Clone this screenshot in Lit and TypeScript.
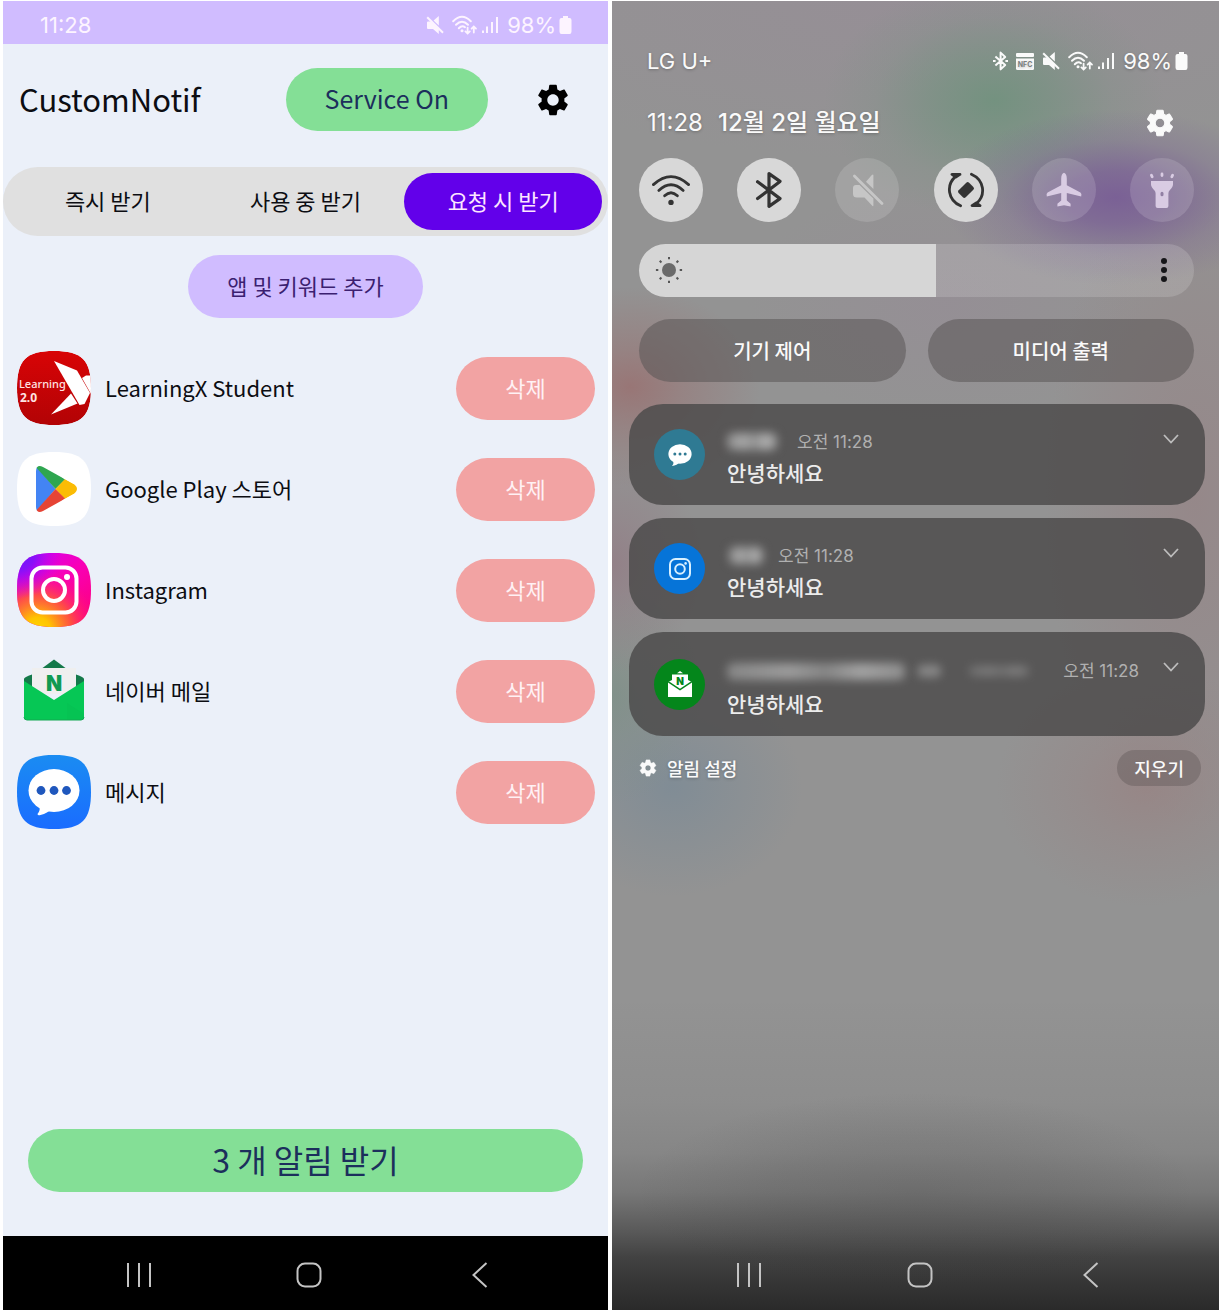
import { LitElement, html, css, svg, type TemplateResult } from "lit";
import { customElement, state } from "lit/decorators.js";
import { classMap } from "lit/directives/class-map.js";
import { styleMap } from "lit/directives/style-map.js";

const SQUIRCLE = "M37 0C65 0 74 9 74 37S65 74 37 74 0 65 0 37 9 0 37 0Z";
const GEAR =
  "M19.14 12.94c.04-.3.06-.61.06-.94 0-.32-.02-.64-.07-.94l2.03-1.58c.18-.14.23-.41.12-.61l-1.92-3.32c-.12-.22-.37-.29-.59-.22l-2.39.96c-.5-.38-1.03-.7-1.62-.94l-.36-2.54c-.04-.24-.24-.41-.48-.41h-3.84c-.24 0-.43.17-.47.41l-.36 2.54c-.59.24-1.13.57-1.62.94l-2.39-.96c-.22-.08-.47 0-.59.22L2.74 8.87c-.12.21-.08.47.12.61l2.03 1.58c-.05.3-.09.63-.09.94s.02.64.07.94l-2.03 1.58c-.18.14-.23.41-.12.61l1.92 3.32c.12.22.37.29.59.22l2.39-.96c.5.38 1.03.7 1.62.94l.36 2.54c.05.24.24.41.48.41h3.84c.24 0 .44-.17.47-.41l.36-2.54c.59-.24 1.13-.56 1.62-.94l2.39.96c.22.08.47 0 .59-.22l1.92-3.32c.12-.22.07-.47-.12-.61l-2.01-1.58zM12 15.6c-1.98 0-3.6-1.62-3.6-3.6s1.62-3.6 3.6-3.6 3.6 1.62 3.6 3.6-1.62 3.6-3.6 3.6z";
const GEAR_BOLD = `${GEAR}`;

const gear = (size: number, stroke = 0) => html`
  <svg width=${size} height=${size} viewBox="0 0 24 24" fill="currentColor" stroke="currentColor"
    stroke-width=${stroke} stroke-linejoin="round" aria-hidden="true">
    <path d=${GEAR_BOLD} />
  </svg>`;

/* ---------- status bar ---------- */
const statusMute = html`
  <svg width="18" height="18" viewBox="0 0 18 18" fill="currentColor" aria-hidden="true">
    <path d="M1 6.4Q1 5.4 2 5.4H4.8L12.8 13V18L7 13H2Q1 13 1 12Z" />
    <path d="M12.8 0V9.4L7.6 4.4Z" />
    <path d="M1.2 1.2 17 16.8" fill="none" stroke="currentColor" stroke-width="2" />
  </svg>`;
const statusWifi = html`
  <svg class="st-wifi" width="26" height="20" viewBox="0 0 26 20" fill="none" stroke="currentColor" stroke-linecap="round" aria-hidden="true">
    <g stroke-width="2">
      <path d="M1.2 6.2Q10 -2.6 18.8 6.2" />
      <path d="M4 9.8Q10 3.6 16 9.8" />
      <path d="M6.8 13.2Q10 9.8 13 12.2" />
    </g>
    <circle cx="10" cy="15.8" r="1.5" fill="currentColor" stroke="none" />
    <g stroke-width="1.8">
      <path d="M15.6 12.6V18.4M13.4 16.4 15.6 18.6 17.8 16.4" />
      <path d="M21.8 17.6V11.6M19.6 13.6 21.8 11.4 24 13.6" />
    </g>
  </svg>`;
const statusSignal = html`
  <svg width="17" height="18" viewBox="0 0 17 18" fill="currentColor" aria-hidden="true">
    <rect x="0" y="14.5" width="2" height="2.5" />
    <rect x="4" y="10.5" width="2" height="6.5" />
    <rect x="9" y="6" width="2" height="11" />
    <rect x="14" y="1" width="2" height="16" />
  </svg>`;
const statusBattery = html`
  <svg width="13" height="18" viewBox="0 0 13 18" fill="currentColor" aria-hidden="true">
    <path d="M4 0H9V2H10.5Q12.5 2 12.5 4V15.5Q12.5 18 10.5 18H2.5Q.5 18 .5 15.5V4Q.5 2 2.5 2H4Z" />
  </svg>`;
const statusBluetooth = html`
  <svg width="15" height="20" viewBox="0 0 15 20" fill="none" stroke="currentColor" stroke-width="2" stroke-linejoin="round" aria-hidden="true">
    <path d="M2.4 5.4 12.2 14 7.6 18.4V1.6L12.2 6 2.4 14.6M0 10H2.6M12.4 10H15" />
  </svg>`;
const statusNfc = html`
  <svg width="18" height="17" viewBox="0 0 18 17" aria-hidden="true">
    <rect width="18" height="4" rx="1" fill="currentColor" />
    <path d="M0 5.6H18V15.5Q18 17 16.5 17H1.5Q0 17 0 15.5Z" fill="currentColor" />
    <text x="9" y="14" text-anchor="middle" class="nfc">NFC</text>
  </svg>`;

/* ---------- quick toggles ---------- */
const qWifi = html`
  <svg width="40" height="34" viewBox="0 0 40 34" fill="none" stroke="currentColor" stroke-width="2.8" stroke-linecap="round" aria-hidden="true">
    <path d="M2.4 11.6Q20 -4.4 37.6 11.6" />
    <path d="M7.8 17.4Q20 6 32.2 17.4" />
    <path d="M13.6 22.8Q20 16.6 26.4 22.8" />
    <circle cx="20" cy="29.4" r="2.7" fill="currentColor" stroke="none" />
  </svg>`;
const qBluetooth = html`
  <svg width="30" height="38" viewBox="0 0 30 38" fill="none" stroke="currentColor" stroke-width="3.2" stroke-linecap="round" stroke-linejoin="round" aria-hidden="true">
    <path d="M3.6 10.8 26 27.6 15 35.4V2.6L26 10.4 3.6 27.6" />
  </svg>`;
const qMute = html`
  <svg width="34" height="34" viewBox="0 0 34 34" fill="currentColor" aria-hidden="true">
    <path d="M6 12H9.5L23.4 25.6V32.2Q23.4 34 22 32.6L14.5 24.6H7Q3 24.6 3 21V15Q3 12 6 12Z" />
    <path d="M23.4 2.6V16L16 8.8 21.8 2Q23.4 .6 23.4 2.6Z" />
    <path d="M4.4 3 32 30.6" fill="none" stroke="currentColor" stroke-width="2.8" stroke-linecap="round" />
  </svg>`;
const qRotate = html`
  <svg width="38" height="38" viewBox="0 0 38 38" fill="none" stroke="currentColor" stroke-width="2.8" stroke-linecap="round" stroke-linejoin="round" aria-hidden="true">
    <path d="M13.6 34.8C.6 29-1 14 8.4 5.6M5 3.4H13L8.8 6Z" />
    <path d="M24.4 3.2C37.4 9 39 24 29.6 32.4M33 34.6H25L29.2 32Z" />
    <rect x="11.6" y="14" width="14.8" height="10" rx="2" fill="currentColor" stroke="none" transform="rotate(-45 19 19)" />
  </svg>`;
const qPlane = html`
  <svg width="36" height="36" viewBox="0 0 36 36" fill="currentColor" aria-hidden="true">
    <path d="M18 .8Q20.8 1.6 20.8 7V13.2L34.4 20.4Q36 21.4 35.2 24.4L20.8 21V28.6L24.6 31.8V34.6L18 33.2 11.4 34.6V31.8L15.2 28.6V21L.8 24.4Q0 21.4 1.6 20.4L15.2 13.2V7Q15.2 1.6 18 .8Z" />
  </svg>`;
const qTorch = html`
  <svg width="26" height="36" viewBox="0 0 26 36" aria-hidden="true">
    <path fill="currentColor" fill-rule="evenodd" d="M2 9H24V12.5Q24 15 20.5 18.6Q19.4 19.8 19.4 21.5V34Q19.4 36 17.4 36H8.6Q6.6 36 6.6 34V21.5Q6.6 19.8 5.5 18.6Q2 15 2 12.5ZM13 19.8A1.5 1.5 0 0 0 11.5 21.3V22.7A1.5 1.5 0 0 0 14.5 22.7V21.3A1.5 1.5 0 0 0 13 19.8Z" />
    <path fill="none" stroke="currentColor" stroke-width="2.8" stroke-linecap="round" d="M2.4 3.2 3.2 4.8M13 2V3.6M23.6 3.2 22.8 4.8" />
  </svg>`;

/* ---------- app icons ---------- */
const appLearning = html`
  <svg class="app" viewBox="0 0 74 74" aria-hidden="true">
    <defs>
      <linearGradient id="lx" x2="0" y2="1"><stop stop-color="#d80406" /><stop offset="1" stop-color="#b20305" /></linearGradient>
      <clipPath id="lxc"><path d=${SQUIRCLE} /></clipPath>
    </defs>
    <g clip-path="url(#lxc)">
      <path d=${SQUIRCLE} fill="url(#lx)" />
      <path d="M37 10 60 19.5 73 42 67.5 53 62.5 54Z" fill="#fff" />
      <path d="M65 27 69 24.5H74V43Z" fill="#fff" />
      <path d="M54 42.5 60.5 52.5 34 63.5Z" fill="#fff" />
      <text x="2" y="37" class="lx1">Learning</text>
      <text x="3" y="51" class="lx2">2.0</text>
    </g>
  </svg>`;
const appPlay = html`
  <svg class="app" viewBox="0 0 74 74" aria-hidden="true">
    <defs><clipPath id="gp"><path d="M19 19Q19.5 12 26 15L57.5 32.5Q62.5 37 57.5 41.5L26 59Q19.5 62 19 55Z" /></clipPath></defs>
    <path d=${SQUIRCLE} fill="#fff" />
    <g clip-path="url(#gp)">
      <path d="M16 10V64L38.5 37Z" fill="#4384f4" />
      <path d="M16 12 38.5 37 48 27.5 26 10Z" fill="#2fa650" />
      <path d="M48 27 38.5 37 48 47 66 37Z" fill="#fbbc05" />
      <path d="M16 62 38.5 37 48 46.5 26 64Z" fill="#e64435" />
    </g>
  </svg>`;
const appInstagram = html`
  <svg class="app" viewBox="0 0 74 74" aria-hidden="true">
    <defs>
      <linearGradient id="ig1" x1=".2" x2=".9" y2="1"><stop stop-color="#d400f0" /><stop offset=".4" stop-color="#f800b8" /><stop offset="1" stop-color="#ff0078" /></linearGradient>
      <radialGradient id="ig2" cx=".28" cy="1.04" r=".85"><stop stop-color="#ffd600" /><stop offset=".2" stop-color="#ffc400" /><stop offset=".55" stop-color="#ff5a36" stop-opacity=".85" /><stop offset="1" stop-color="#ff0090" stop-opacity="0" /></radialGradient>
      <radialGradient id="ig3" cx="0" cy="0" r=".62"><stop stop-color="#5a1cff" /><stop offset=".4" stop-color="#8a10f8" /><stop offset="1" stop-color="#d400f0" stop-opacity="0" /></radialGradient>
    </defs>
    <path d=${SQUIRCLE} fill="url(#ig1)" />
    <path d=${SQUIRCLE} fill="url(#ig2)" />
    <path d=${SQUIRCLE} fill="url(#ig3)" />
    <g fill="none" stroke="#fff" stroke-width="4">
      <rect x="14.5" y="14.5" width="45" height="45" rx="11" />
      <circle cx="37" cy="37" r="11" />
    </g>
    <circle cx="50" cy="24" r="3" fill="#fff" />
  </svg>`;
const appNaver = html`
  <svg class="app" viewBox="0 0 74 74" aria-hidden="true">
    <path d="M37 5.5 48.5 14H25.5Z" fill="#14794a" />
    <path d="M7 25Q7 23 15 20.5V36L7 30ZM67 25Q67 23 59 20.5V36L67 30Z" fill="#14794a" />
    <path d="M15 14H59V40H15Z" fill="#efefef" />
    <path d="M7 27 37 46 67 27V63Q67 66 64 66H10Q7 66 7 63Z" fill="#06c755" />
    <path d="M50 49 67 60V63Q67 66 64 66H50Z" fill="#05b850" opacity=".3" />
    <path d="M7 63Q7 66 10 66H64Q67 66 67 63" fill="none" stroke="#12a853" />
    <text x="37" y="37" text-anchor="middle" class="nv">N</text>
  </svg>`;
const appMessage = html`
  <svg class="app" viewBox="0 0 74 74" aria-hidden="true">
    <defs><linearGradient id="ms" x2="0" y2="1"><stop stop-color="#1a8cf2" /><stop offset="1" stop-color="#1a6cff" /></linearGradient></defs>
    <path d=${SQUIRCLE} fill="url(#ms)" />
    <ellipse cx="37" cy="35.5" rx="25.5" ry="21.5" fill="#fff" />
    <path d="M22 49Q24 55 20.5 59 20.8 61 23.5 60 31 58 34 54Z" fill="#fff" />
    <g fill="#1f57bd"><circle cx="24" cy="35.5" r="4.4" /><circle cx="37" cy="35.5" r="4.4" /><circle cx="49.5" cy="35.5" r="4.4" /></g>
  </svg>`;

/* ---------- notification badges ---------- */
const badgeMessage = html`
  <svg width="24" height="24" viewBox="0 0 24 24" fill="#fff" aria-hidden="true">
    <ellipse cx="12" cy="11" rx="11.6" ry="9.8" />
    <path d="M5.4 17Q6 21 4 23 9 22.4 12 19Z" />
    <g fill="#2f7a93"><circle cx="6.8" cy="11" r="1.5" /><circle cx="12" cy="11" r="1.5" /><circle cx="17.2" cy="11" r="1.5" /></g>
  </svg>`;
const badgeInstagram = html`
  <svg width="24" height="24" viewBox="0 0 24 24" fill="none" stroke="#d8f0ff" stroke-width="2" aria-hidden="true">
    <rect x="2" y="2" width="20" height="20" rx="5.5" />
    <circle cx="12" cy="12" r="4.8" />
    <circle cx="17.6" cy="6.4" r="1.3" fill="#d8f0ff" stroke="none" />
  </svg>`;
const badgeNaver = html`
  <svg width="24" height="26" viewBox="0 0 24 26" aria-hidden="true">
    <path d="M9 2.2 12 0 15 2.2Z" fill="#fff" />
    <path d="M4 3.4H20V9L24 11V26H0V11L4 9Z" fill="#fff" />
    <path d="M0 10.6 12 18.6 24 10.6" fill="none" stroke="#04861b" stroke-width="1.5" />
    <text x="12" y="13.6" text-anchor="middle" class="nv-s">N</text>
  </svg>`;

interface AppEntry { name: string; icon: TemplateResult }
interface Notice { tint: string; icon: TemplateResult; masks: string[]; wide: boolean }

@customElement("app-root")
export class AppRoot extends LitElement {
  @state() private mode = 2;
  @state() private brightness = 53.5;

  private modes = ["즉시 받기", "사용 중 받기", "요청 시 받기"];
  private apps: AppEntry[] = [
    { name: "LearningX Student", icon: appLearning },
    { name: "Google Play 스토어", icon: appPlay },
    { name: "Instagram", icon: appInstagram },
    { name: "네이버 메일", icon: appNaver },
    { name: "메시지", icon: appMessage },
  ];
  private toggles = [
    { icon: qWifi, label: "Wi-Fi", on: true, dim: false },
    { icon: qBluetooth, label: "블루투스", on: true, dim: false },
    { icon: qMute, label: "무음", on: false, dim: true },
    { icon: qRotate, label: "자동 회전", on: true, dim: false },
    { icon: qPlane, label: "비행기 탑승 모드", on: false, dim: false },
    { icon: qTorch, label: "손전등", on: false, dim: false },
  ];
  private notices: Notice[] = [
    { tint: "teal", icon: badgeMessage, masks: ["m1"], wide: false },
    { tint: "blue", icon: badgeInstagram, masks: ["m2"], wide: false },
    { tint: "leaf", icon: badgeNaver, masks: ["m3", "m4", "m5"], wide: true },
  ];

  static styles = css`
    :host {
      display: block;
      background: #fff;
      font-family: "Noto Sans CJK KR", sans-serif;
      color: #0c0d12;
    }
    *, *::before, *::after { box-sizing: border-box; }
    button {
      font: inherit;
      color: inherit;
      border: 0;
      margin: 0;
      padding: 0;
      background: none;
      cursor: pointer;
    }
    svg { display: block; flex: none; }
    h1, p, ul { margin: 0; padding: 0; font-weight: 400; }
    .stage {
      display: grid;
      grid-template-columns: 605fr 607fr;
      gap: 4px;
      padding: 1px 0 0 3px;
      min-height: 100vh;
    }
    .phone { display: flex; flex-direction: column; min-width: 0; }

    /* status bar */
    .status {
      display: flex;
      align-items: center;
      justify-content: space-between;
      font: 400 22px/28px Inter, "Noto Sans CJK KR", sans-serif;
    }
    .status-icons { display: flex; align-items: center; gap: 8px; }
    .st-wifi { margin-right: -4px; }
    .power { display: flex; align-items: center; gap: 3px; }

    /* left phone */
    .left { background: #ebf0f9; }
    .left .status {
      height: 43px;
      padding: 5px 36px 0 37px;
      background: #d0bcff;
      color: #fdf4ff;
    }
    .head { display: flex; align-items: center; padding: 24px 36px 36px 16px; }
    .head h1 { flex: 1; padding-bottom: 2px; font-size: 31px; line-height: 48px; }
    .pill {
      height: 63px;
      border-radius: 32px;
      padding: 0 39px 3px;
      font-size: 22px;
      line-height: 32px;
    }
    .green { background: #84df96; color: #1c2f5c; }
    .service { font-size: 25px; }
    .head .gear { margin-left: 46px; color: #000; }
    .tabs {
      display: grid;
      grid-template-columns: repeat(3, 1fr);
      padding: 6px;
      background: #e0e0e0;
      border-radius: 35px;
    }
    .tab { height: 57px; padding-bottom: 3px; border-radius: 29px; font-size: 22px; line-height: 32px; }
    .tab.active { background: #6200ea; color: #fde6ff; }
    .add {
      align-self: center;
      margin-top: 19px;
      background: #d0bcff;
      color: #3b1f70;
    }
    .apps {
      list-style: none;
      display: flex;
      flex-direction: column;
      gap: 27px;
      padding: 33px 13px 0 14px;
    }
    .apps li { display: flex; align-items: center; gap: 14px; }
    .app { width: 74px; height: 74px; }
    .app-name { flex: 1; padding-bottom: 3px; font-size: 22px; line-height: 32px; }
    .del { width: 139px; padding: 0 0 3px; background: #f2a3a3; color: #fff1f4; }
    .take {
      margin: auto 25px 44px;
      font-size: 32px;
      line-height: 48px;
    }
    .lx1 { font: 500 11px "Noto Sans", sans-serif; fill: #ffe3e3; }
    .lx2 { font: 700 12px "Noto Sans", sans-serif; fill: #ffe3e3; }
    .nv { font: 900 21px Inter, sans-serif; fill: #0f9a51; }
    .nv-s { font: 900 10px Inter, sans-serif; fill: #04861b; }
    .nfc { font: 700 7px Inter, sans-serif; fill: #7b8080; }

    /* system navigation */
    .nav {
      display: grid;
      grid-template-columns: repeat(3, 1fr);
      height: 74px;
      padding: 4px 43px 0 51px;
      color: #c4c4c4;
    }
    .nav button { display: grid; place-items: center; }
    .left .nav { background: #000; }

    /* right phone */
    .right {
      color: #fafafa;
      background:
        radial-gradient(ellipse 280px 100px at 50% 91%, rgba(50, 50, 50, .16), rgba(50, 50, 50, .1) 50%, rgba(50, 50, 50, 0)),
        linear-gradient(to bottom, rgba(40, 40, 40, 0) 76%, rgba(40, 40, 40, .05) 84%, rgba(40, 40, 40, .12) 88%, rgba(40, 40, 40, .26) 91%, rgba(40, 40, 40, .54) 94%, rgba(40, 40, 40, .76) 96%, rgba(40, 40, 40, .88) 98%, #2a2a2a 100%),
        radial-gradient(ellipse 175px 88px at 83% 15%, rgba(116, 84, 150, .8), rgba(116, 84, 150, .62) 30%, rgba(116, 84, 150, .22) 65%, rgba(116, 84, 150, 0)),
        radial-gradient(ellipse 170px 120px at 63% 7.6%, rgba(110, 146, 124, .85), rgba(110, 146, 124, .5) 38%, rgba(110, 146, 124, .16) 70%, rgba(110, 146, 124, 0)),
        radial-gradient(ellipse 130px 100px at 3% 29.5%, rgba(154, 108, 108, .75), rgba(154, 108, 108, .4) 40%, rgba(154, 108, 108, 0)),
        radial-gradient(ellipse 90px 110px at 0% 43%, rgba(146, 116, 128, .6), rgba(146, 116, 128, .3) 45%, rgba(146, 116, 128, 0)),
        radial-gradient(ellipse 90px 110px at 0% 53%, rgba(122, 144, 134, .7), rgba(122, 144, 134, .3) 45%, rgba(122, 144, 134, 0)),
        radial-gradient(ellipse 130px 110px at 10% 60%, rgba(122, 138, 150, .75), rgba(122, 138, 150, .4) 45%, rgba(122, 138, 150, 0)),
        radial-gradient(ellipse 150px 120px at 88% 60%, rgba(152, 130, 130, .75), rgba(152, 130, 130, .36) 45%, rgba(152, 130, 130, 0)),
        radial-gradient(ellipse 150px 330px at 96% 38%, rgba(150, 132, 134, .75), rgba(150, 132, 134, .4) 50%, rgba(150, 132, 134, 0)),
        radial-gradient(ellipse 200px 120px at 55% 23%, rgba(150, 140, 150, .6), rgba(150, 140, 150, 0)),
        radial-gradient(ellipse 500px 160px at 50% 0%, rgba(150, 142, 150, .9), rgba(150, 142, 150, 0)),
        #939393;
    }
    .right .status { padding: 46px 31px 0 35px; }
    .clock {
      display: flex;
      align-items: center;
      padding: 29px 43px 16px 35px;
      gap: 15px;
      font: 400 24px/38px Inter, "Noto Sans CJK KR", sans-serif;
    }
    .clock .date { flex: 1; font-weight: 500; }
    .clock p, .right .status, .foot .set { text-shadow: 0 1px 3px rgba(0, 0, 0, .25); }
    .body { display: flex; flex-direction: column; padding: 0 25px 0 27px; }
    .toggles { display: flex; justify-content: space-between; }
    .toggle {
      display: grid;
      place-items: center;
      width: 64px;
      height: 64px;
      border-radius: 50%;
      background: rgba(255, 255, 255, .14);
      color: rgba(226, 214, 236, .88);
    }
    .toggle.dim { color: #c6c6c6; }
    .toggle.on { background: #d8d8d8; color: #333; }
    .bright { position: relative; margin-top: 22px; height: 53px; }
    .bright input {
      appearance: none;
      -webkit-appearance: none;
      display: block;
      width: 100%;
      height: 53px;
      margin: 0;
      border-radius: 27px;
      background: linear-gradient(to right, #d6d6d6 var(--level), rgba(255, 255, 255, .15) var(--level));
    }
    .bright input::-webkit-slider-thumb { -webkit-appearance: none; width: 1px; height: 53px; background: transparent; }
    .sun, .dots { position: absolute; top: 12px; }
    .sun { left: 16px; pointer-events: none; }
    .dots { right: 16px; }
    .media { display: grid; grid-template-columns: 1fr 1fr; gap: 22px; margin-top: 22px; }
    .media button {
      height: 63px;
      border-radius: 32px;
      background: rgba(90, 86, 86, .55);
      font-size: 20px;
      font-weight: 500;
      line-height: 32px;
    }
    .notices {
      list-style: none;
      display: flex;
      flex-direction: column;
      gap: 13px;
      padding: 22px 14px 0 17px;
    }
    .notice {
      display: flex;
      align-items: center;
      gap: 22px;
      min-height: 101px;
      padding: 0 24px 0 25px;
      border-radius: 34px;
      background: rgba(76, 75, 75, .84);
    }
    .notice.wide { min-height: 104px; }
    .badge { display: grid; place-items: center; flex: none; width: 51px; height: 51px; border-radius: 50%; }
    .teal { background: #2f7a93; }
    .blue { background: #0674d8; }
    .leaf { background: #04861b; }
    .msg { flex: 1; min-width: 0; padding-top: 6px; }
    .meta { display: flex; align-items: center; font: 400 17px/28px Inter, "Noto Sans CJK KR", sans-serif; color: #b0b0b0; }
    .wide .msg { padding-top: 8px; }
    .wide .meta { padding-bottom: 2px; }
    .wide time { margin-left: auto; }
    .msg p { font-size: 21px; font-weight: 500; line-height: 32px; color: #ececec; }
    .mask {
      height: 17px;
      border-radius: 6px;
      filter: blur(5px);
      background: linear-gradient(to right, #909090, #a8a8a8 35%, #8e8e8e 55%, #b0b0b0 75%, #989898);
    }
    .m1 { width: 50px; margin-right: 20px; }
    .m2 { width: 34px; margin: 0 15px 0 2px; }
    .m3 { width: 178px; margin-right: 12px; opacity: .85; }
    .m4 { width: 24px; height: 12px; opacity: .7; margin-right: 28px; }
    .m5 { width: 60px; height: 10px; opacity: .45; }
    .expand { align-self: flex-start; margin-top: 28px; color: #bdbdbd; }
    .foot {
      display: flex;
      align-items: center;
      justify-content: space-between;
      padding: 14px 18px 0 26px;
      font-size: 18px;
      font-weight: 500;
      line-height: 26px;
    }
    .set { display: flex; align-items: center; gap: 9px; }
    .clear { height: 36px; padding: 0 17px; border-radius: 18px; background: rgba(100, 90, 90, .45); }
    .right .nav { margin-top: auto; }
  `;

  private power() {
    return html`${statusMute}${statusWifi}${statusSignal}
      <span class="power"><span>98%</span>${statusBattery}</span>`;
  }

  private nav() {
    return html`
      <nav class="nav">
        <button aria-label="최근 앱">
          <svg width="26" height="26" viewBox="0 0 26 26" stroke="currentColor" stroke-width="2" aria-hidden="true"><path d="M2 1V25M13 1V25M24 1V25" /></svg>
        </button>
        <button aria-label="홈">
          <svg width="26" height="26" viewBox="0 0 26 26" fill="none" stroke="currentColor" stroke-width="2" aria-hidden="true"><rect x="1.5" y="1.5" width="23" height="23" rx="7.5" /></svg>
        </button>
        <button aria-label="뒤로">
          <svg width="26" height="26" viewBox="0 0 26 26" fill="none" stroke="currentColor" stroke-width="2" aria-hidden="true"><path d="M19.5 1 6.5 13 19.5 25" /></svg>
        </button>
      </nav>`;
  }

  private renderApp() {
    return html`
      <section class="phone left">
        <div class="status"><span>11:28</span><div class="status-icons">${this.power()}</div></div>
        <header class="head">
          <h1>CustomNotif</h1>
          <button class="pill green service">Service On</button>
          <button class="gear" aria-label="설정">${gear(38)}</button>
        </header>
        <div class="tabs">
          ${this.modes.map((m, i) => html`
            <button class=${classMap({ tab: true, active: i === this.mode })} aria-pressed=${i === this.mode}
              @click=${() => (this.mode = i)}>${m}</button>`)}
        </div>
        <button class="pill add">앱 및 키워드 추가</button>
        <ul class="apps">
          ${this.apps.map((a) => html`
            <li>
              ${a.icon}
              <span class="app-name">${a.name}</span>
              <button class="pill del">삭제</button>
            </li>`)}
        </ul>
        <button class="pill green take">3 개 알림 받기</button>
        ${this.nav()}
      </section>`;
  }

  private renderNotice(n: Notice) {
    return html`
      <li class=${classMap({ notice: true, wide: n.wide })}>
        <span class="badge ${n.tint}">${n.icon}</span>
        <div class="msg">
          <div class="meta">
            ${n.masks.map((m) => html`<span class="mask ${m}"></span>`)}
            <time>오전 11:28</time>
          </div>
          <p>안녕하세요</p>
        </div>
        <button class="expand" aria-label="펼치기">
          <svg width="20" height="14" viewBox="0 0 20 14" fill="none" stroke="currentColor" stroke-width="1.8" aria-hidden="true"><path d="M3 3 10 10.5 17 3" /></svg>
        </button>
      </li>`;
  }

  private renderPanel() {
    const rays = [0, 45, 90, 135, 180, 225, 270, 315];
    return html`
      <section class="phone right">
        <div class="status">
          <span>LG U+</span>
          <div class="status-icons">${statusBluetooth}${statusNfc}${this.power()}</div>
        </div>
        <div class="clock">
          <p>11:28</p>
          <p class="date">12월 2일 월요일</p>
          <button aria-label="설정">${gear(32, 0.8)}</button>
        </div>
        <div class="body">
          <div class="toggles">
            ${this.toggles.map((t) => html`
              <button class=${classMap({ toggle: true, on: t.on, dim: t.dim })} aria-label=${t.label} aria-pressed=${t.on}>${t.icon}</button>`)}
          </div>
          <div class="bright">
            <input type="range" min="0" max="100" step="0.5" aria-label="밝기"
              .value=${String(this.brightness)}
              style=${styleMap({ "--level": `${this.brightness}%` })}
              @input=${(e: Event) => (this.brightness = Number((e.target as HTMLInputElement).value))} />
            <svg class="sun" width="28" height="28" viewBox="0 0 28 28" aria-hidden="true">
              <circle cx="14" cy="14" r="7" fill="#6a6a6a" />
              ${rays.map((r) => svg`<path d="M14 .9V3.3" stroke="#555" stroke-width="2" transform=${`rotate(${r} 14 14)`} />`)}
            </svg>
            <button class="dots" aria-label="더보기">
              <svg width="28" height="28" viewBox="0 0 28 28" fill="#151518" aria-hidden="true">
                <circle cx="14" cy="5" r="3" /><circle cx="14" cy="14" r="3" /><circle cx="14" cy="23" r="3" />
              </svg>
            </button>
          </div>
          <div class="media">
            <button>기기 제어</button>
            <button>미디어 출력</button>
          </div>
        </div>
        <ul class="notices">${this.notices.map((n) => this.renderNotice(n))}</ul>
        <div class="foot">
          <button class="set">${gear(20, 0.8)}<span>알림 설정</span></button>
          <button class="clear">지우기</button>
        </div>
        ${this.nav()}
      </section>`;
  }

  render() {
    return html`<main class="stage">${this.renderApp()}${this.renderPanel()}</main>`;
  }
}
